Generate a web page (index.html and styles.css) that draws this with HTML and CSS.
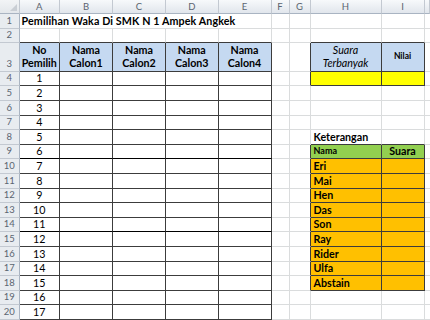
FILE: index.html
```html
<!DOCTYPE html>
<html>
<head>
<meta charset="utf-8">
<link rel="stylesheet" href="styles.css">
</head>
<body>
<div class="sheet">
  <div class="row">
    <span class="ch corner"><i class="tri"></i></span><span class="ch">A</span><span class="ch">B</span><span class="ch">C</span><span class="ch">D</span><span class="ch">E</span><span class="ch">F</span><span class="ch">G</span><span class="ch">H</span><span class="ch">I</span><span class="ch"></span>
  </div>
  <div class="row">
    <span class="rh">1</span><span class="title">Pemilihan Waka Di SMK N 1 Ampek Angkek</span><span></span><span></span><span></span><span></span><span></span>
  </div>
  <div class="row">
    <span class="rh">2</span><span class="tb"></span><span class="tb"></span><span class="tb"></span><span class="tb"></span><span class="tb"></span><span></span><span></span><span class="tb"></span><span class="tb"></span><span></span>
  </div>
  <div class="row">
    <span class="rh">3</span><span class="t hd">No<br>Pemilih</span><span class="t hd">Nama<br>Calon1</span><span class="t hd">Nama<br>Calon2</span><span class="t hd">Nama<br>Calon3</span><span class="t hd">Nama<br>Calon4</span><span></span><span class="tr"></span><span class="t hd it">Suara<br>Terbanyak</span><span class="t hd sm">Nilai</span><span></span>
  </div>
  <div class="row">
    <span class="rh">4</span><span class="t c">1</span><span class="t"></span><span class="t"></span><span class="t"></span><span class="t"></span><span></span><span class="tr"></span><span class="t yel"></span><span class="t yel"></span><span></span>
  </div>
  <div class="row">
    <span class="rh">5</span><span class="t c">2</span><span class="t"></span><span class="t"></span><span class="t"></span><span class="t"></span><span></span><span></span><span></span><span></span><span></span>
  </div>
  <div class="row">
    <span class="rh">6</span><span class="t c">3</span><span class="t"></span><span class="t"></span><span class="t"></span><span class="t"></span><span></span><span></span><span></span><span></span><span></span>
  </div>
  <div class="row">
    <span class="rh">7</span><span class="t c">4</span><span class="t"></span><span class="t"></span><span class="t"></span><span class="t"></span><span></span><span></span><span></span><span></span><span></span>
  </div>
  <div class="row">
    <span class="rh">8</span><span class="t c">5</span><span class="t"></span><span class="t"></span><span class="t"></span><span class="t"></span><span></span><span></span><span class="tb bold">Keterangan</span><span class="tb"></span><span></span>
  </div>
  <div class="row">
    <span class="rh">9</span><span class="t c dk">6</span><span class="t dk"></span><span class="t dk"></span><span class="t dk"></span><span class="t dk"></span><span></span><span class="tr"></span><span class="t grn bold sm2">Nama</span><span class="t grn bold c">Suara</span><span></span>
  </div>
  <div class="row">
    <span class="rh">10</span><span class="t c">7</span><span class="t"></span><span class="t"></span><span class="t"></span><span class="t"></span><span></span><span class="tr"></span><span class="t org bold">Eri</span><span class="t org"></span><span></span>
  </div>
  <div class="row">
    <span class="rh">11</span><span class="t c">8</span><span class="t"></span><span class="t"></span><span class="t"></span><span class="t"></span><span></span><span class="tr"></span><span class="t org bold">Mai</span><span class="t org"></span><span></span>
  </div>
  <div class="row">
    <span class="rh">12</span><span class="t c">9</span><span class="t"></span><span class="t"></span><span class="t"></span><span class="t"></span><span></span><span class="tr"></span><span class="t org bold">Hen</span><span class="t org"></span><span></span>
  </div>
  <div class="row">
    <span class="rh">13</span><span class="t c">10</span><span class="t"></span><span class="t"></span><span class="t"></span><span class="t"></span><span></span><span class="tr"></span><span class="t org bold">Das</span><span class="t org"></span><span></span>
  </div>
  <div class="row">
    <span class="rh">14</span><span class="t c dk">11</span><span class="t dk"></span><span class="t dk"></span><span class="t dk"></span><span class="t dk"></span><span></span><span class="tr"></span><span class="t org bold">Son</span><span class="t org"></span><span></span>
  </div>
  <div class="row">
    <span class="rh">15</span><span class="t c">12</span><span class="t"></span><span class="t"></span><span class="t"></span><span class="t"></span><span></span><span class="tr"></span><span class="t org bold">Ray</span><span class="t org"></span><span></span>
  </div>
  <div class="row">
    <span class="rh">16</span><span class="t c">13</span><span class="t"></span><span class="t"></span><span class="t"></span><span class="t"></span><span></span><span class="tr"></span><span class="t org bold">Rider</span><span class="t org"></span><span></span>
  </div>
  <div class="row">
    <span class="rh">17</span><span class="t c">14</span><span class="t"></span><span class="t"></span><span class="t"></span><span class="t"></span><span></span><span class="tr"></span><span class="t org bold">Ulfa</span><span class="t org"></span><span></span>
  </div>
  <div class="row">
    <span class="rh">18</span><span class="t c">15</span><span class="t"></span><span class="t"></span><span class="t"></span><span class="t"></span><span></span><span class="tr"></span><span class="t org bold">Abstain</span><span class="t org"></span><span></span>
  </div>
  <div class="row">
    <span class="rh">19</span><span class="t c">16</span><span class="t"></span><span class="t"></span><span class="t"></span><span class="t"></span><span></span><span></span><span></span><span></span><span></span>
  </div>
  <div class="row">
    <span class="rh">20</span><span class="t c">17</span><span class="t"></span><span class="t"></span><span class="t"></span><span class="t"></span><span></span><span></span><span></span><span></span><span></span>
  </div>
</div>
</body>
</html>
```

FILE: styles.css
```css
* {
  box-sizing: border-box;
}

html, body {
  margin: 0;
  padding: 0;
  width: 430px;
  height: 320px;
  overflow: hidden;
  background: #ffffff;
}

body {
  font-family: Lato, "Open Sans", sans-serif;
  font-size: 10.7px;
  color: #000;
}

.sheet {
  width: 430px;
  display: grid;
  grid-template-columns: 19.5px 40.5px 53px 53px 52.5px 53px 18px 21px 71px 43px minmax(0, 1fr);
  grid-template-rows: 14px 14.6px 14.6px 28.6px repeat(17, 14.6px);
  overflow: hidden;
}

.row {
  display: contents;
}

.sheet span {
  display: flex;
  align-items: flex-end;
  padding: 0 3px 1px;
  line-height: 12px;
  white-space: nowrap;
  border-right: 1px solid #dadcdd;
  border-bottom: 1px solid #dadcdd;
  min-width: 0;
}

/* column headers */
.sheet .ch {
  align-items: center;
  justify-content: center;
  padding: 0;
  font-size: 9.5px;
  color: #5b6570;
  background: linear-gradient(#f7f9fb, #e1e6ec);
  border-right: 1px solid #c3c9d1;
  border-bottom: 1px solid #a9b4c2;
}

.sheet .corner {
  position: relative;
  background: linear-gradient(#f2f4f6, #e3e7eb);
}

.tri {
  position: absolute;
  right: 2px;
  bottom: 2px;
  width: 0;
  height: 0;
  border-left: 7px solid transparent;
  border-bottom: 7px solid #c9ced4;
}

/* row headers */
.sheet .rh {
  justify-content: center;
  padding: 0 0 1px;
  font-size: 9.5px;
  color: #5b6570;
  background: #e8ecf0;
  border-right: 1px solid #a9b4c2;
  border-bottom: 1px solid #c3c9d1;
}

.sheet .title {
  grid-column: span 5;
  font-weight: 700;
  padding-left: 2px;
  letter-spacing: 0.12px;
}

/* dark borders */
.sheet .t {
  border-right: 1px solid #3c3c3c;
  border-bottom: 1px solid #3c3c3c;
}

.sheet .dk {
  border-bottom-color: #000;
}

.sheet .tb {
  border-bottom: 1px solid #3c3c3c;
}

.sheet .tr {
  border-right: 1px solid #3c3c3c;
}

.sheet .c {
  justify-content: center;
}

.sheet .hd {
  background: #c5d9f1;
  font-weight: 700;
  text-align: center;
  justify-content: center;
  line-height: 13.5px;
  padding-bottom: 1px;
}

.sheet .it {
  font-weight: 400;
  font-style: italic;
}

.sheet .sm {
  font-size: 8.5px;
  align-items: center;
}

.sheet .yel {
  background: #ffff00;
}

.sheet .grn {
  background: #92d050;
}

.sheet .org {
  background: #ffc000;
}

.bold {
  font-weight: 700;
}

.sheet .sm2 {
  font-size: 9px;
}
```
